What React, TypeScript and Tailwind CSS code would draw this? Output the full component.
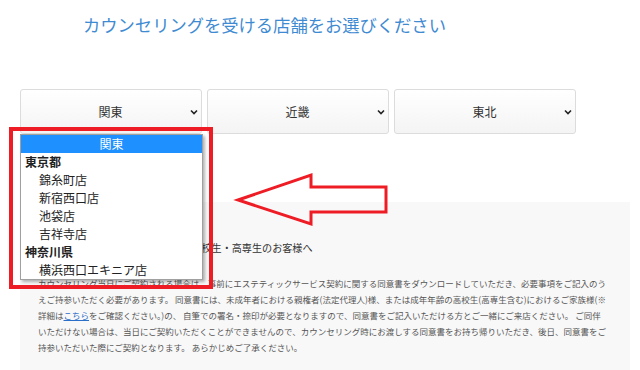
import React from 'react';

const jp = { fontFamily: '"Noto Sans CJK JP", "Noto Sans", sans-serif' };

const regions = ['関東', '近畿', '東北'];

const Chevron: React.FC = () => (
  <svg width="8" height="6" viewBox="0 0 8 6" className="shrink-0">
    <path d="M1 1.5 L4 4.5 L7 1.5" fill="none" stroke="#222" strokeWidth="1.6" />
  </svg>
);

const SelectBox: React.FC<{ label: string }> = ({ label }) => (
  <div className="h-[45px] flex items-center rounded-[3px] border border-[#dcdcdc] bg-gradient-to-b from-white to-[#f4f4f4] pl-[10px] pr-[3px]">
    <span className="flex-1 text-center text-[12px] text-[#333]">{label}</span>
    <Chevron />
  </div>
);

// open list of the first select
const options: { label: string; kind: 'current' | 'group' | 'shop' }[] = [
  { label: '関東', kind: 'current' },
  { label: '東京都', kind: 'group' },
  { label: '錦糸町店', kind: 'shop' },
  { label: '新宿西口店', kind: 'shop' },
  { label: '池袋店', kind: 'shop' },
  { label: '吉祥寺店', kind: 'shop' },
  { label: '神奈川県', kind: 'group' },
  { label: '横浜西口エキニア店', kind: 'shop' },
];

const Dropdown: React.FC = () => (
  <div className="absolute left-[20px] top-[134px] w-[183px] bg-white border border-[#a0a0a0] shadow-[2px_2px_3px_rgba(0,0,0,0.3)] text-[12px] text-[#222]">
    {options.map((o) => {
      if (o.kind === 'current')
        return (
          <div key={o.label} className="h-[18px] flex items-center justify-center bg-[#1e90ff] text-white">
            {o.label}
          </div>
        );
      if (o.kind === 'group')
        return (
          <div key={o.label} className="h-[18px] flex items-center pl-[4px] font-bold">
            {o.label}
          </div>
        );
      return (
        <div key={o.label} className="h-[18px] flex items-center pl-[18px]">
          {o.label}
        </div>
      );
    })}
  </div>
);

const Arrow: React.FC = () => (
  <svg className="absolute left-0 top-0 pointer-events-none" width="640" height="370">
    <polygon
      points="238,200 311,175 311,187 386,187 386,212 311,212 311,224"
      fill="none"
      stroke="#ee1c25"
      strokeWidth="3"
    />
  </svg>
);

export default function App() {
  return (
    <div className="relative w-[640px] h-[370px] overflow-hidden bg-white" style={jp}>
      {/* Title */}
      <h1 className="pt-[12px] pl-[83px] text-[17.3px] leading-[26px] font-normal text-[#3f8bd2]">
        カウンセリングを受ける店舗をお選びください
      </h1>

      {/* Region selects */}
      <div className="mt-[51px] ml-[20px] w-[556px] grid grid-cols-3 gap-[5px]">
        {regions.map((r) => (
          <SelectBox key={r} label={r} />
        ))}
      </div>

      {/* Notice panel */}
      <div className="mt-[68px] ml-[20px] w-[610px] h-[200px] bg-[#f8f8f8] pt-[39px] pl-[18px]">
        <h2 className="ml-[2px] text-[10.1px] leading-[14px] font-normal text-[#333] whitespace-nowrap">
          ２０歳未満の未成年者、中学生・高校生・高専生のお客様へ
        </h2>
        <div className="mt-[20px] text-[8.5px] leading-[16px] text-[#555] whitespace-nowrap">
          <p>カウンセリング当日にご契約される場合は、事前にエステティックサービス契約に関する同意書をダウンロードしていただき、必要事項をご記入のう</p>
          <p>えご持参いただく必要があります。 同意書には、未成年者における親権者(法定代理人)様、または成年年齢の高校生(高専生含む)におけるご家族様(※</p>
          <p>
            詳細は<span className="text-[#2a6fc9] underline">こちら</span>をご確認ください。)の、 自筆での署名・捺印が必要となりますので、同意書をご記入いただける方とご一緒にご来店ください。 ご同伴
          </p>
          <p>いただけない場合は、当日にご契約いただくことができませんので、カウンセリング時にお渡しする同意書をお持ち帰りいただき、後日、同意書をご</p>
          <p>持参いただいた際にご契約となります。 あらかじめご了承ください。</p>
        </div>
      </div>

      <Dropdown />

      {/* annotation: red frame + arrow */}
      <div className="absolute left-[9px] top-[127px] w-[204px] h-[162px] border-[4px] border-[#ee1c25]" />
      <Arrow />
    </div>
  );
}
